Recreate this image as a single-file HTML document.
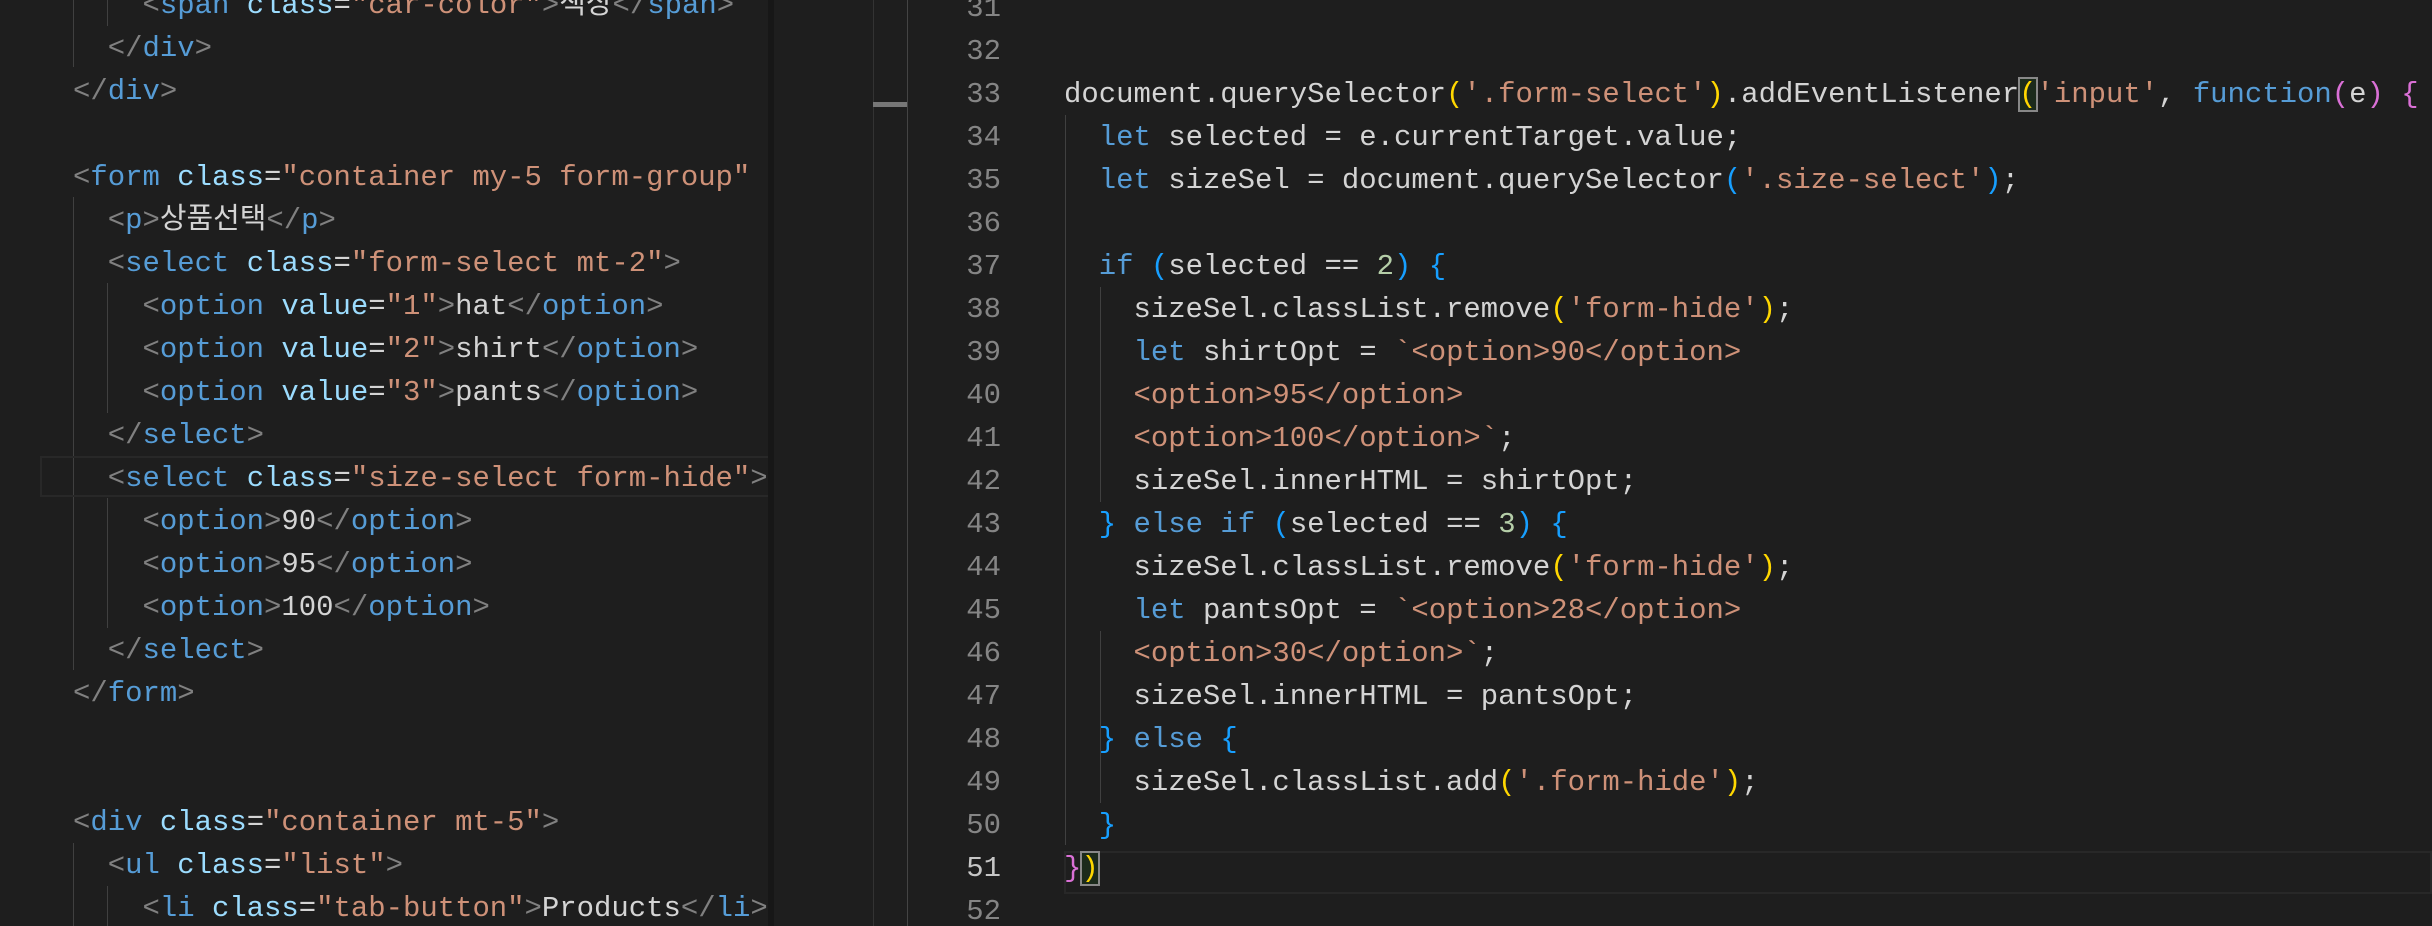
<!DOCTYPE html>
<html><head><meta charset="utf-8"><style>
html,body{margin:0;padding:0;background:#1e1e1e;width:2432px;height:926px;overflow:hidden;position:relative}
.m{font-family:"Liberation Mono","Noto Sans CJK KR",monospace;font-size:28.95px;line-height:43.05px;white-space:pre;color:#d4d4d4}
#left{position:absolute;left:0;top:0;width:768px;height:926px;overflow:hidden;background:#1e1e1e}
#strip{position:absolute;left:768px;top:0;width:6px;height:926px;background:#171717}
.code{position:absolute}
.ln{position:absolute;left:900px;top:-13.5px;width:101px;text-align:right;color:#858585}
.g{position:absolute;width:1px;background:#404040}
.p{color:#808080}.t{color:#569cd6}.a{color:#9cdcfe}.s{color:#ce9178}.k{color:#569cd6}.n{color:#b5cea8}
.y{color:#ffd700}.o{color:#da70d6}.b{color:#179fff}
.box{outline:2px solid #888;outline-offset:-1px;background:#1b2a1b}
</style></head><body>
<div id="left">
<div class="g" style="left:73px;top:0;height:67px"></div>
<div class="g" style="left:107px;top:0;height:26px"></div>
<div class="g" style="left:73px;top:197px;height:473px"></div>
<div class="g" style="left:107px;top:283px;height:130px"></div>
<div class="g" style="left:107px;top:498px;height:130px"></div>
<div class="g" style="left:73px;top:843px;height:83px"></div>
<div class="g" style="left:107px;top:886px;height:40px"></div>
<div style="position:absolute;left:40px;top:456px;width:740px;height:41px;border:2px solid #282828;box-sizing:border-box"></div>
<div class="code m" style="left:73px;top:-16.5px">    <span class="p">&lt;</span><span class="t">span</span> <span class="a">class</span>=<span class="s">"car-color"</span><span class="p">&gt;</span>색상<span class="p">&lt;/</span><span class="t">span</span><span class="p">&gt;</span>
  <span class="p">&lt;/</span><span class="t">div</span><span class="p">&gt;</span>
<span class="p">&lt;/</span><span class="t">div</span><span class="p">&gt;</span>

<span class="p">&lt;</span><span class="t">form</span> <span class="a">class</span>=<span class="s">"container my-5 form-group"</span> <span class="a">style</span>
  <span class="p">&lt;</span><span class="t">p</span><span class="p">&gt;</span>상품선택<span class="p">&lt;/</span><span class="t">p</span><span class="p">&gt;</span>
  <span class="p">&lt;</span><span class="t">select</span> <span class="a">class</span>=<span class="s">"form-select mt-2"</span><span class="p">&gt;</span>
    <span class="p">&lt;</span><span class="t">option</span> <span class="a">value</span>=<span class="s">"1"</span><span class="p">&gt;</span>hat<span class="p">&lt;/</span><span class="t">option</span><span class="p">&gt;</span>
    <span class="p">&lt;</span><span class="t">option</span> <span class="a">value</span>=<span class="s">"2"</span><span class="p">&gt;</span>shirt<span class="p">&lt;/</span><span class="t">option</span><span class="p">&gt;</span>
    <span class="p">&lt;</span><span class="t">option</span> <span class="a">value</span>=<span class="s">"3"</span><span class="p">&gt;</span>pants<span class="p">&lt;/</span><span class="t">option</span><span class="p">&gt;</span>
  <span class="p">&lt;/</span><span class="t">select</span><span class="p">&gt;</span>
  <span class="p">&lt;</span><span class="t">select</span> <span class="a">class</span>=<span class="s">"size-select form-hide"</span><span class="p">&gt;</span>
    <span class="p">&lt;</span><span class="t">option</span><span class="p">&gt;</span>90<span class="p">&lt;/</span><span class="t">option</span><span class="p">&gt;</span>
    <span class="p">&lt;</span><span class="t">option</span><span class="p">&gt;</span>95<span class="p">&lt;/</span><span class="t">option</span><span class="p">&gt;</span>
    <span class="p">&lt;</span><span class="t">option</span><span class="p">&gt;</span>100<span class="p">&lt;/</span><span class="t">option</span><span class="p">&gt;</span>
  <span class="p">&lt;/</span><span class="t">select</span><span class="p">&gt;</span>
<span class="p">&lt;/</span><span class="t">form</span><span class="p">&gt;</span>


<span class="p">&lt;</span><span class="t">div</span> <span class="a">class</span>=<span class="s">"container mt-5"</span><span class="p">&gt;</span>
  <span class="p">&lt;</span><span class="t">ul</span> <span class="a">class</span>=<span class="s">"list"</span><span class="p">&gt;</span>
    <span class="p">&lt;</span><span class="t">li</span> <span class="a">class</span>=<span class="s">"tab-button"</span><span class="p">&gt;</span>Products<span class="p">&lt;/</span><span class="t">li</span><span class="p">&gt;</span></div>
</div>
<div id="strip"></div>
<div class="g" style="left:873px;top:0;height:926px;background:#333"></div>
<div class="g" style="left:907px;top:0;height:926px;background:#444"></div>
<div style="position:absolute;left:873px;top:102px;width:34px;height:5px;background:#777"></div>
<div style="position:absolute;left:1064px;top:851px;width:1368px;height:43px;border:2px solid #282828;box-sizing:border-box"></div>
<div class="g" style="left:1065px;top:115px;height:730px"></div>
<div class="g" style="left:1100px;top:287px;height:215px"></div>
<div class="g" style="left:1100px;top:631px;height:172px"></div>
<div class="g" style="left:1100px;top:760px;height:43px"></div>
<div class="ln m">31
32
33
34
35
36
37
38
39
40
41
42
43
44
45
46
47
48
49
50
<span style="color:#c6c6c6">51</span>
52</div>
<div class="code m" style="left:1064px;top:-13.5px">

document.querySelector<span class="y">(</span><span class="s">'.form-select'</span><span class="y">)</span>.addEventListener<span class="y box">(</span><span class="s">'input'</span>, <span class="k">function</span><span class="o">(</span>e<span class="o">)</span> <span class="o">{</span>
  <span class="k">let</span> selected = e.currentTarget.value;
  <span class="k">let</span> sizeSel = document.querySelector<span class="b">(</span><span class="s">'.size-select'</span><span class="b">)</span>;

  <span class="k">if</span> <span class="b">(</span>selected == <span class="n">2</span><span class="b">)</span> <span class="b">{</span>
    sizeSel.classList.remove<span class="y">(</span><span class="s">'form-hide'</span><span class="y">)</span>;
    <span class="k">let</span> shirtOpt = <span class="s">`&lt;option&gt;90&lt;/option&gt;</span>
<span class="s">    &lt;option&gt;95&lt;/option&gt;</span>
<span class="s">    &lt;option&gt;100&lt;/option&gt;`</span>;
    sizeSel.innerHTML = shirtOpt;
  <span class="b">}</span> <span class="k">else</span> <span class="k">if</span> <span class="b">(</span>selected == <span class="n">3</span><span class="b">)</span> <span class="b">{</span>
    sizeSel.classList.remove<span class="y">(</span><span class="s">'form-hide'</span><span class="y">)</span>;
    <span class="k">let</span> pantsOpt = <span class="s">`&lt;option&gt;28&lt;/option&gt;</span>
<span class="s">    &lt;option&gt;30&lt;/option&gt;`</span>;
    sizeSel.innerHTML = pantsOpt;
  <span class="b">}</span> <span class="k">else</span> <span class="b">{</span>
    sizeSel.classList.add<span class="y">(</span><span class="s">'.form-hide'</span><span class="y">)</span>;
  <span class="b">}</span>
<span class="o">}</span><span class="y box">)</span></div>
</body></html>
